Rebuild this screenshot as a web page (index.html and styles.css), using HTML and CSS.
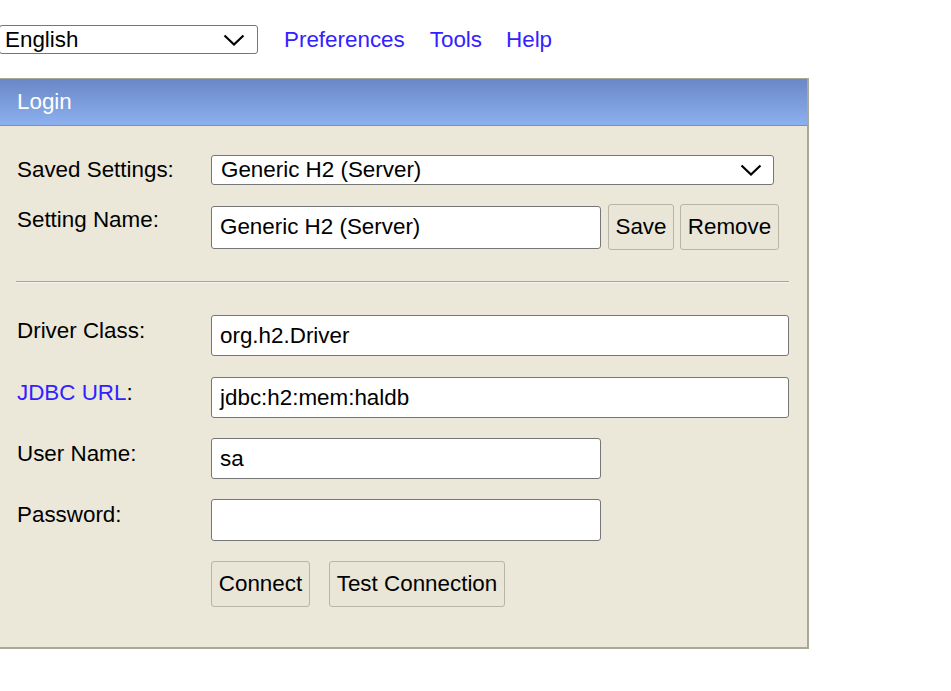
FILE: index.html
```html
<!DOCTYPE html>
<html>
<head>
<meta charset="utf-8">
<link rel="stylesheet" href="styles.css">
</head>
<body>
<div class="topbar">
  <div class="sel sel-lang">
    <span class="sel-text">English</span>
    <svg class="chev" width="22" height="12" viewBox="0 0 22 12"><path d="M1.5 1.5 L11 10.5 L20.5 1.5" fill="none" stroke="#000" stroke-width="2.2"/></svg>
  </div>
  <a class="toplink l1" href="#">Preferences</a>
  <a class="toplink l2" href="#">Tools</a>
  <a class="toplink l3" href="#">Help</a>
</div>
<div class="panel">
  <div class="panel-head">Login</div>
  <div class="panel-body">
    <div class="row row-saved">
      <div class="label">Saved Settings:</div>
      <div class="sel sel-saved">
        <span class="sel-text">Generic H2 (Server)</span>
        <svg class="chev" width="22" height="12" viewBox="0 0 22 12"><path d="M1.5 1.5 L11 10.5 L20.5 1.5" fill="none" stroke="#000" stroke-width="2.2"/></svg>
      </div>
    </div>
    <div class="row row-name">
      <div class="label top">Setting Name:</div>
      <div class="controls">
        <div class="field short">Generic H2 (Server)</div>
        <button class="btn btn-save">Save</button>
        <button class="btn btn-remove">Remove</button>
      </div>
    </div>
    <div class="sep"></div>
    <div class="row row-driver">
      <div class="label top">Driver Class:</div>
      <div class="field long">org.h2.Driver</div>
    </div>
    <div class="row row-jdbc">
      <div class="label top"><a class="jdbc" href="#">JDBC URL</a>:</div>
      <div class="field long">jdbc:h2:mem:haldb</div>
    </div>
    <div class="row row-user">
      <div class="label top">User Name:</div>
      <div class="field short">sa</div>
    </div>
    <div class="row row-pass">
      <div class="label top">Password:</div>
      <div class="field short"></div>
    </div>
    <div class="row row-buttons">
      <div class="label"></div>
      <div class="controls">
        <button class="btn btn-connect">Connect</button>
        <button class="btn btn-test">Test Connection</button>
      </div>
    </div>
  </div>
</div>
</body>
</html>
```
FILE: styles.css
```css
html, body {
  margin: 0;
  padding: 0;
  background: #fff;
}
body {
  font-family: "Liberation Sans", Arial, sans-serif;
  font-size: 22.4px;
  color: #000;
}
.topbar {
  display: flex;
  align-items: center;
  padding-top: 25px;
  height: 29px;
  margin-bottom: 24px;
}
.sel {
  position: relative;
  box-sizing: border-box;
  background: #fff;
  border: 1px solid #767676;
  border-radius: 3px;
  display: flex;
  align-items: center;
}
.sel-lang {
  width: 259px;
  height: 29px;
  margin-left: -1px;
  padding-left: 5px;
}
.sel .chev {
  position: absolute;
  top: 50%;
  margin-top: -6px;
}
.sel-lang .chev {
  right: 12px;
}
.toplink {
  color: #3322ff;
  text-decoration: none;
  line-height: 26px;
}
.l1 { margin-left: 26px; }
.l2 { margin-left: 25px; }
.l3 { margin-left: 24px; }

.panel {
  width: 807px;
  border-top: 1px solid #a9a898;
  border-right: 2px solid #a9a898;
  border-bottom: 2px solid #a9a898;
  background: #ebe8da;
}
.panel-head {
  height: 46px;
  line-height: 46px;
  padding-left: 17px;
  color: #fff;
  background: linear-gradient(#6a87c6, #8cb0ee);
  border-bottom: 1px solid #6d8fd6;
}
.panel-body {
  padding: 29px 18px 40px 17px;
  display: flex;
  flex-direction: column;
}
.row {
  display: flex;
  align-items: center;
}
.label {
  width: 194px;
  flex: none;
  line-height: 26px;
  white-space: nowrap;
}
.label.top {
  align-self: flex-start;
  padding-top: 3px;
}
.sel-saved {
  width: 563px;
  height: 30px;
  padding-left: 9px;
}
.sel-saved .chev {
  right: 11px;
}
.controls {
  display: flex;
  align-items: center;
}
.row-name {
  margin-top: 19px;
  height: 46px;
}
.field {
  box-sizing: border-box;
  height: 41px;
  background: #fff;
  border: 1px solid #767676;
  border-radius: 3px;
  padding-left: 8px;
  display: flex;
  align-items: center;
  white-space: pre;
}
.field.short {
  width: 390px;
}
.field.long {
  flex: 1;
}
.row-name .field {
  height: 43px;
}
.btn {
  font-family: inherit;
  font-size: 22.4px;
  color: #000;
  background: #e9e6d8;
  border: 1px solid #b8b5a6;
  border-radius: 3px;
  padding: 0 6px;
  height: 46px;
  margin: 0;
  white-space: nowrap;
}
.btn-save { margin-left: 7px; width: 66px; }
.btn-remove { margin-left: 6px; width: 99px; }
.btn-connect { width: 99px; height: 46px; }
.btn-test { margin-left: 19px; width: 176px; height: 46px; }
.sep {
  margin: 31px 0 0 -1px;
  height: 0;
  border-top: 1px solid #a6a597;
  border-bottom: 1px solid #f4f3ee;
}
.row-driver { margin-top: 32px; }
.row-jdbc { margin-top: 21px; }
.row-user { margin-top: 20px; }
.row-pass { margin-top: 20px; }
.row-pass .field { height: 42px; }
.row-buttons { margin-top: 20px; }
.jdbc {
  color: #3322ff;
  text-decoration: none;
}
```
